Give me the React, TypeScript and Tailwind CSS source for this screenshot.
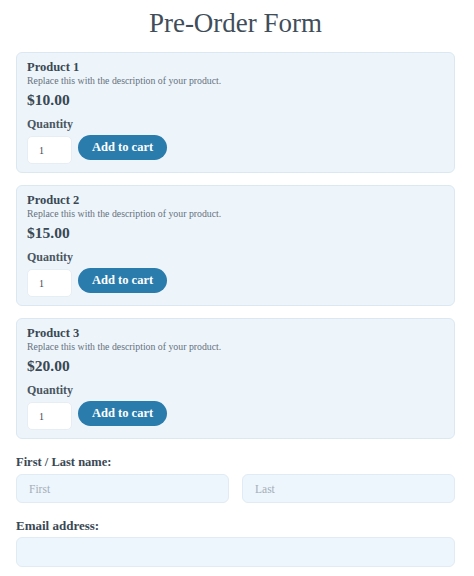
import React from 'react'

const products = [
  { name: 'Product 1', price: '$10.00' },
  { name: 'Product 2', price: '$15.00' },
  { name: 'Product 3', price: '$20.00' },
]

function ProductCard({ name, price }: { name: string; price: string }) {
  return (
    <div className="rounded-[6px] border border-[#dbe8f2] bg-[#edf5fb] px-[10px] pt-[7px] pb-[8px]">
      <h3 className="text-[12.5px] leading-[15px] font-bold text-[#3a4854]">{name}</h3>
      <p className="text-[9.8px] leading-[12px] text-[#66717c]">Replace this with the description of your product.</p>
      <p className="mt-[3px] text-[15.5px] leading-[20px] font-bold text-[#3a4854]">{price}</p>
      <p className="mt-[7px] text-[12px] leading-[15px] font-bold text-[#4a5660]">Quantity</p>
      <div className="mt-[4px] flex items-start gap-[6px]">
        <input
          type="number"
          defaultValue={1}
          className="h-[28px] w-[45px] rounded-[5px] border border-[#e6eef5] bg-white px-[11px] text-[10px] text-[#3d4a55] outline-none [appearance:textfield]"
        />
        <button
          type="button"
          className="-mt-px h-[25px] rounded-full bg-[#2a7cad] px-[14px] text-[12.5px] leading-[25px] font-bold text-white"
        >
          Add to cart
        </button>
      </div>
    </div>
  )
}

export default function App() {
  return (
    <div className="min-h-[576px] bg-white pl-[16px] pr-[19px] pt-[8px] font-['Liberation_Serif',serif]">
      <h1 className="text-center text-[27px] leading-[30px] text-[#3f4e5a]">Pre-Order Form</h1>

      <div className="mt-[14px] flex flex-col gap-[12px]">
        {products.map((p) => (
          <ProductCard key={p.name} name={p.name} price={p.price} />
        ))}
      </div>

      <label className="mt-[16px] block text-[12.5px] leading-[15px] font-bold text-[#3a4854]">First / Last name:</label>
      <div className="mt-[4px] grid grid-cols-2 gap-[13px]">
        <input
          placeholder="First"
          className="h-[29px] rounded-[6px] border border-[#e0ebf4] bg-[#eef6fd] px-[12px] text-[11.5px] text-[#3d4a55] outline-none placeholder:text-[#a3aeb8]"
        />
        <input
          placeholder="Last"
          className="h-[29px] rounded-[6px] border border-[#e0ebf4] bg-[#eef6fd] px-[12px] text-[11.5px] text-[#3d4a55] outline-none placeholder:text-[#a3aeb8]"
        />
      </div>

      <label className="mt-[15px] block text-[13px] leading-[16px] font-bold text-[#3a4854]">Email address:</label>
      <input
        type="email"
        className="mt-[3px] block h-[30px] w-full rounded-[6px] border border-[#e0ebf4] bg-[#eef6fd] px-[12px] text-[11.5px] outline-none"
      />
    </div>
  )
}
